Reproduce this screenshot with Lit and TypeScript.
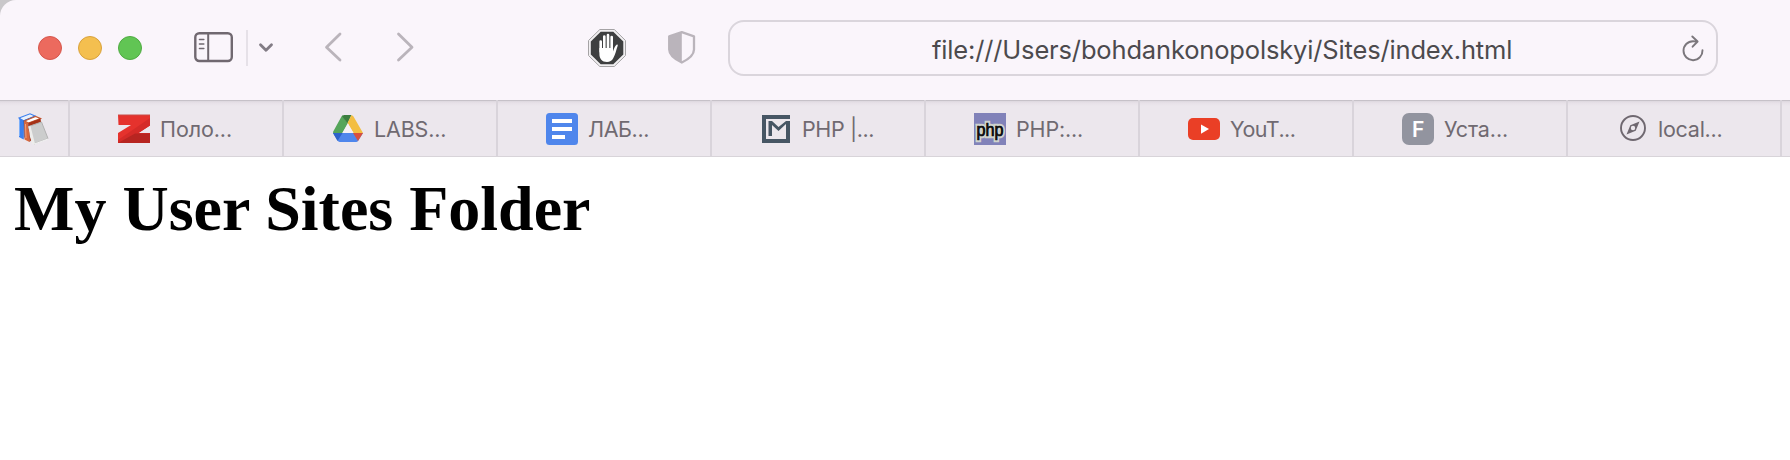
import { LitElement, html, css, svg } from "lit";
import { customElement, property } from "lit/decorators.js";

const icons = {
  books: svg`
    <path d="M1 5 12 0.800 17 3 5.500 8Z" fill="#e9f0fa" stroke="#3b7fee" stroke-width="1.200"/>
    <path d="M1 5 5 7 5.500 26.500 1 24Z" fill="#3b7fee"/>
    <path d="M1.500 6.500V23" stroke="#7db0fa" stroke-width="1"/>
    <path d="M5 7.500 17 3 17 8 8 22 5.500 26.500Z" fill="#2c67cd"/>
    <path d="M6.500 8 17.500 3.500 22.500 5.500 10.500 10Z" fill="#fff" stroke="#c55a33" stroke-width="1.200"/>
    <path d="M6 8 10.500 10 11.500 29 6.500 26.500Z" fill="#d8683d"/>
    <path d="M10.500 10 22.500 5.500 23 9 14 14 13.500 27 11.500 29Z" fill="#a63216"/>
    <path d="M7.500 11 8 25" stroke="#eda27f" stroke-width="1"/>
    <path d="M10.500 13.500 23.500 9 30 25.500 16 31Z" fill="#cccdcd" stroke="#b2b2b2" stroke-width="1"/>
    <path d="M10.500 13.500 12.500 13 17 31 14.500 31.500 12 24Z" fill="#ededeb"/>
    <path d="M16.500 31 30 26" stroke="#f1f1f1" stroke-width="1.300"/>`,
  zed: svg`
    <path d="M0 2h32v10.500L20.500 20H32v10H0V20L13 12H0.500Z" fill="#e5322d"/>
    <path d="M32 5v7.500L20.500 20H32v10H0V27Z" fill="#d52b28"/>
    <path d="M17 20.500H32V30H0Z" fill="#b72521"/>
    <path d="M0 2h32" stroke="#c94d48" stroke-width="1"/>`,
  drive: svg`
    <path d="M10.600 2.300 15.600 10.500 6 27.500 1 19.500Q1 18.800 1.500 18L9.500 3.500Z" fill="#55a55a"/>
    <path d="M12 2h7.500L15.500 10.500 10 3Z" fill="#3c7e40"/>
    <path d="M19.500 2Q21 2.500 21.500 3.500L31 20H21.500L15.500 10Z" fill="#f3be42"/>
    <path d="M1 20H31L26 28Q25.500 29 24 29H8Q6.500 29 6 28Z" fill="#4f86ec"/>
    <path d="M1 20H10.500L5.500 28Z" fill="#2d62c9"/>
    <path d="M21 20H31L26 28Z" fill="#d8503f"/>
    <path d="M16 10.500 21.500 20H10.500Z" fill="#f5f1f6"/>`,
  docs: svg`
    <rect width="32" height="32" rx="3.500" fill="#4f86ec"/>
    <path d="M6 6h20v4H6zM6 14h20v4H6zM6 22h13v4H6z" fill="#fff"/>`,
  metanit: svg`
    <path d="M30 2v4H6v20h20V11l-7.500 7L12 12v11H8.500V8H12l6.500 6L26 8h4v22H2V2Z" fill="#475664"/>`,
  php: svg`
    <rect width="32" height="32" fill="#8182b9"/>
    <text x="16" y="22.500" text-anchor="middle" font-family="Liberation Sans, sans-serif" font-size="18" textLength="27" lengthAdjust="spacingAndGlyphs" fill="#111" stroke="#cfd3cd" stroke-width="4.500" stroke-linejoin="miter" paint-order="stroke">php</text>
    <text x="16" y="22.500" text-anchor="middle" font-family="Liberation Sans, sans-serif" font-size="18" textLength="27" lengthAdjust="spacingAndGlyphs" fill="#111" stroke="#111" stroke-width=".6" aria-hidden="true">php</text>`,
  youtube: svg`
    <rect y="5" width="32" height="22" rx="5" fill="#ea3f26"/>
    <path d="M13 11.500 21 16 13 20.800Z" fill="#fff"/>`,
  letterF: svg`
    <rect width="32" height="32" rx="7" fill="#92949f"/>
    <text x="16.300" y="23.500" text-anchor="middle" font-family="Inter, sans-serif" font-weight="600" font-size="21" fill="#fff">F</text>`,
  compass: svg`
    <circle cx="17" cy="15" r="12" fill="none" stroke="#6f6870" stroke-width="1.900"/>
    <path fill-rule="evenodd" d="M23.500 8.500 19.700 17.700 10.500 21.500 14.300 12.300ZM17 12.800a2.200 2.200 0 1 0 0 4.400 2.200 2.200 0 0 0 0-4.400Z" fill="#6f6870"/>`,
};

type IconName = keyof typeof icons;

interface Tab {
  icon: IconName;
  label: string;
  tracking: number;
}

const TABS: Tab[] = [
  { icon: "zed", label: "Поло...", tracking: -0.1 },
  { icon: "drive", label: "LABS...", tracking: -0.15 },
  { icon: "docs", label: "ЛАБ...", tracking: -0.4 },
  { icon: "metanit", label: "PHP |...", tracking: -0.4 },
  { icon: "php", label: "PHP:...", tracking: -0.15 },
  { icon: "youtube", label: "YouT...", tracking: -0.55 },
  { icon: "letterF", label: "Уста...", tracking: -0.1 },
  { icon: "compass", label: "local...", tracking: -0.25 },
];

@customElement("site-icon")
export class SiteIcon extends LitElement {
  static styles = css`
    :host { display: block; flex: none; width: 32px; height: 32px; }
    .glyph { display: block; }
  `;
  @property() name: IconName = "docs";
  render() {
    return html`<svg class="glyph" width="32" height="32" viewBox="0 0 32 32">${icons[this.name]}</svg>`;
  }
}

@customElement("browser-toolbar")
export class BrowserToolbar extends LitElement {
  static styles = css`
    :host {
      display: flex; align-items: center; box-sizing: border-box; height: 100px;
      padding: 0 72px 4px 38px; background: #faf5fb;
      border-top-left-radius: 16px;
      font-family: Inter, "Liberation Sans", sans-serif;
    }
    svg { display: block; flex: none; }
    .lights { display: flex; gap: 16px; }
    .light { box-sizing: border-box; width: 24px; height: 24px; border-radius: 50%; border: 1px solid; }
    .close { background: #ec6a5e; border-color: #d6564c; }
    .minimise { background: #f4bf4f; border-color: #d9a23c; }
    .zoom { background: #61c554; border-color: #4fab42; }
    .sidebar { margin-left: 52px; }
    .rule { width: 2px; height: 36px; margin-left: 12px; background: #e6e1e8; }
    .chevron { margin-left: 10px; }
    .back { margin-left: 49px; }
    .forward { margin-left: 53px; }
    .hand { margin-left: 172px; }
    .shield { margin-left: 40px; }
    .address {
      display: flex; align-items: center; box-sizing: border-box; flex: 1; height: 56px;
      margin-left: 30px; padding: 3px 9px 0 202px; border: 2px solid #dad5dc; border-radius: 16px;
    }
    .url { flex: 1; font-size: 25.5px; line-height: 32px; letter-spacing: -0.16px; color: #4c4a4d; white-space: nowrap; }
  `;
  render() {
    return html`
      <div class="lights">
        <div class="light close"></div><div class="light minimise"></div><div class="light zoom"></div>
      </div>
      <svg class="sidebar" width="40" height="40" viewBox="0 0 40 40" fill="none" stroke="#706870">
        <rect x="1.300" y="5.200" width="36.500" height="27.800" rx="4" stroke-width="2.400"/>
        <path d="M14.200 5v28" stroke-width="2"/>
        <path d="M5.500 11.500h4.300M5.500 16h4.300M5.500 20.500h4.300" stroke-width="1.600" stroke-linecap="round"/>
      </svg>
      <div class="rule"></div>
      <svg class="chevron" width="16" height="40" viewBox="0 0 16 40" fill="none" stroke="#827c85" stroke-width="2.800" stroke-linecap="round" stroke-linejoin="round">
        <path d="M2.500 16.700 8 22.300 13.500 16.700"/>
      </svg>
      <svg class="back" width="20" height="40" viewBox="0 0 20 40" fill="none" stroke="#bab4bb" stroke-width="2.800" stroke-linecap="round" stroke-linejoin="round">
        <path d="M17 6 3.500 19.200 17 32"/>
      </svg>
      <svg class="forward" width="20" height="40" viewBox="0 0 20 40" fill="none" stroke="#bab4bb" stroke-width="2.800" stroke-linecap="round" stroke-linejoin="round">
        <path d="M2.500 6 16 19.200 2.500 32"/>
      </svg>
      <svg class="hand" width="40" height="40" viewBox="0 0 40 40">
        <path d="M11.800 1.500h14.500L37.500 12.500v15L26.300 38.500H11.800L.5 27.500v-15Z" fill="#f1eff1" stroke="#a5a3a5"/>
        <path d="M12.700 3.700h12.600L35.300 13.500v13L25.300 36.300H12.700L2.800 26.500v-13Z" fill="#3e3f40"/>
        <path d="M12.700 13.500v10M16.300 8.500v13M20 7v13M23.700 9v13" stroke="#fff" stroke-width="2.600" stroke-linecap="round"/>
        <path d="M11.400 20h13.600v3.500c1-3 2.200-6 3.600-6.800.8-.3 1.300.3 1.100 1-1.500 4.500-2.500 9-4.500 12.500-1.300 2.500-3.500 3.800-6.200 3.800-5 0-7.600-3.500-7.600-8Z" fill="#fff"/>
      </svg>
      <svg class="shield" width="30" height="40" viewBox="0 0 30 40">
        <path d="M13.800 4.200 26 8.300V21.500C26 27.500 19 32 13.800 34.500 8.500 32 1.200 27.500 1.200 21.500V8.300Z" fill="none" stroke="#bab4bb" stroke-width="2.300" stroke-linejoin="round"/>
        <path d="M13.800 4.200V34.500C8.500 32 1.200 27.500 1.200 21.500V8.300Z" fill="#bab4bb"/>
      </svg>
      <div class="address">
        <div class="url">file:///Users/bohdankonopolskyi/Sites/index.html</div>
        <svg width="26" height="32" viewBox="0 0 26 32" fill="none" stroke="#7b777c" stroke-width="1.900" stroke-linecap="round" stroke-linejoin="round">
          <path d="M21.500 16.300A9.500 9.500 0 1 1 12 7.200q2 0 4.200.4M11.300 2.500l5.300 5-5 5.200"/>
        </svg>
      </div>`;
  }
}

@customElement("tab-strip")
export class TabStrip extends LitElement {
  static styles = css`
    :host {
      display: flex; box-sizing: border-box; height: 57px; border-bottom: 1px solid #d8d4d9;
      background: linear-gradient(#c6c1c8 0 1px, #dcd7de 1px, #e7e1e8 3px, #ece7ed 6px);
      font-family: Inter, "Liberation Sans", sans-serif;
    }
    .pinned, .tab { display: flex; align-items: center; box-sizing: border-box; padding-top: 2px; border-right: 2px solid #d9d4db; }
    .pinned { width: 70px; padding-left: 18px; }
    .tab { width: 214px; gap: 10px; padding-left: 48px; }
    .label { font-size: 21.5px; line-height: 30px; color: #706a71; white-space: nowrap; }
  `;
  render() {
    return html`
      <div class="pinned"><site-icon name="books"></site-icon></div>
      ${TABS.map((tab) => html`
        <div class="tab">
          <site-icon name=${tab.icon}></site-icon>
          <span class="label" style="letter-spacing:${tab.tracking}px">${tab.label}</span>
        </div>`)}`;
  }
}

@customElement("app-root")
export class AppRoot extends LitElement {
  static styles = css`
    :host { display: block; height: 460px; overflow: hidden; background: #fff; }
    .chrome { background: #c9c7ca; }
    .title { margin: 0; padding: 15px 14px; font: 700 64px/74px "Liberation Serif", "Times New Roman", serif; color: #000; }
  `;
  render() {
    return html`
      <div class="chrome"><browser-toolbar></browser-toolbar></div>
      <tab-strip></tab-strip>
      <h1 class="title">My User Sites Folder</h1>`;
  }
}
